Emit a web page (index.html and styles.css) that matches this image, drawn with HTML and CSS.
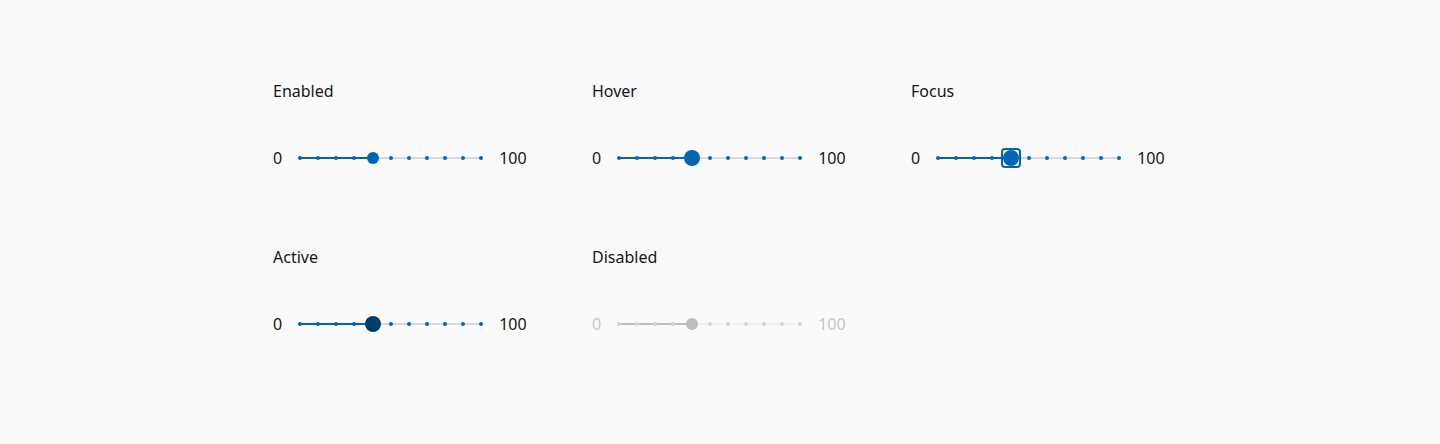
FILE: index.html
```html
<!DOCTYPE html>
<html lang="en">
<head>
<meta charset="utf-8">
<title>Slider states</title>
<link rel="stylesheet" href="styles.css">
</head>
<body>
<main class="grid">
  <section class="cell">
    <div class="label">Enabled</div>
    <div class="slider">
      <span class="min">0</span>
      <div class="rail">
        <div class="fill"></div>
        <span class="tick" style="left:0%"></span><span class="tick" style="left:10%"></span><span class="tick" style="left:20%"></span><span class="tick" style="left:30%"></span><span class="tick" style="left:40%"></span><span class="tick" style="left:50%"></span><span class="tick" style="left:60%"></span><span class="tick" style="left:70%"></span><span class="tick" style="left:80%"></span><span class="tick" style="left:90%"></span><span class="tick" style="left:100%"></span>
        <div class="thumb"></div>
      </div>
      <span class="max">100</span>
    </div>
  </section>
  <section class="cell">
    <div class="label">Hover</div>
    <div class="slider hover">
      <span class="min">0</span>
      <div class="rail">
        <div class="fill"></div>
        <span class="tick" style="left:0%"></span><span class="tick" style="left:10%"></span><span class="tick" style="left:20%"></span><span class="tick" style="left:30%"></span><span class="tick" style="left:40%"></span><span class="tick" style="left:50%"></span><span class="tick" style="left:60%"></span><span class="tick" style="left:70%"></span><span class="tick" style="left:80%"></span><span class="tick" style="left:90%"></span><span class="tick" style="left:100%"></span>
        <div class="thumb"></div>
      </div>
      <span class="max">100</span>
    </div>
  </section>
  <section class="cell">
    <div class="label">Focus</div>
    <div class="slider focus">
      <span class="min">0</span>
      <div class="rail">
        <div class="fill"></div>
        <span class="tick" style="left:0%"></span><span class="tick" style="left:10%"></span><span class="tick" style="left:20%"></span><span class="tick" style="left:30%"></span><span class="tick" style="left:40%"></span><span class="tick" style="left:50%"></span><span class="tick" style="left:60%"></span><span class="tick" style="left:70%"></span><span class="tick" style="left:80%"></span><span class="tick" style="left:90%"></span><span class="tick" style="left:100%"></span>
        <div class="thumb"></div>
      </div>
      <span class="max">100</span>
    </div>
  </section>
  <section class="cell">
    <div class="label">Active</div>
    <div class="slider active">
      <span class="min">0</span>
      <div class="rail">
        <div class="fill"></div>
        <span class="tick" style="left:0%"></span><span class="tick" style="left:10%"></span><span class="tick" style="left:20%"></span><span class="tick" style="left:30%"></span><span class="tick" style="left:40%"></span><span class="tick" style="left:50%"></span><span class="tick" style="left:60%"></span><span class="tick" style="left:70%"></span><span class="tick" style="left:80%"></span><span class="tick" style="left:90%"></span><span class="tick" style="left:100%"></span>
        <div class="thumb"></div>
      </div>
      <span class="max">100</span>
    </div>
  </section>
  <section class="cell">
    <div class="label">Disabled</div>
    <div class="slider disabled">
      <span class="min">0</span>
      <div class="rail">
        <div class="fill"></div>
        <span class="tick" style="left:0%"></span><span class="tick" style="left:10%"></span><span class="tick" style="left:20%"></span><span class="tick" style="left:30%"></span><span class="tick" style="left:40%"></span><span class="tick" style="left:50%"></span><span class="tick" style="left:60%"></span><span class="tick" style="left:70%"></span><span class="tick" style="left:80%"></span><span class="tick" style="left:90%"></span><span class="tick" style="left:100%"></span>
        <div class="thumb"></div>
      </div>
      <span class="max">100</span>
    </div>
  </section>
</main>
</body>
</html>
```

FILE: styles.css
```css
html, body {
  margin: 0;
  padding: 0;
  background: #fafafa;
}

body {
  font-family: "Noto Sans", "Open Sans", sans-serif;
  font-size: 16px;
  line-height: 24px;
  color: #161616;
}

.grid {
  display: grid;
  grid-template-columns: repeat(3, 255px);
  column-gap: 64px;
  row-gap: 75px;
  padding: 79px 0 0 273px;
}

.cell {
  display: flex;
  flex-direction: column;
  gap: 43px;
}

.label {
  height: 24px;
}

.slider {
  display: flex;
  align-items: center;
  gap: 18px;
  height: 24px;
}

.rail {
  position: relative;
  width: 181px;
  height: 2px;
  background: #d9d9d9;
}

.fill {
  width: 40%;
  height: 100%;
  background: #0066b3;
}

.tick {
  position: absolute;
  top: -1px;
  width: 4px;
  height: 4px;
  margin-left: -2px;
  border-radius: 50%;
  background: #0066b3;
}

.thumb {
  position: absolute;
  top: 50%;
  left: 40%;
  width: 12px;
  height: 12px;
  border-radius: 50%;
  background: #0066b3;
  transform: translate(-50%, -50%);
}

.hover .thumb,
.focus .thumb,
.active .thumb {
  width: 16px;
  height: 16px;
}

.focus .thumb::after {
  content: "";
  position: absolute;
  inset: -2px;
  border: 2px solid #0066b3;
  border-radius: 4px;
}

.active .thumb {
  background: #003d6b;
}

.disabled {
  color: #c4c4c4;
}

.disabled .rail {
  background: #efefef;
}

.disabled .fill,
.disabled .thumb {
  background: #bdbdbd;
}

.disabled .tick {
  background: #d2d2d2;
}
```
